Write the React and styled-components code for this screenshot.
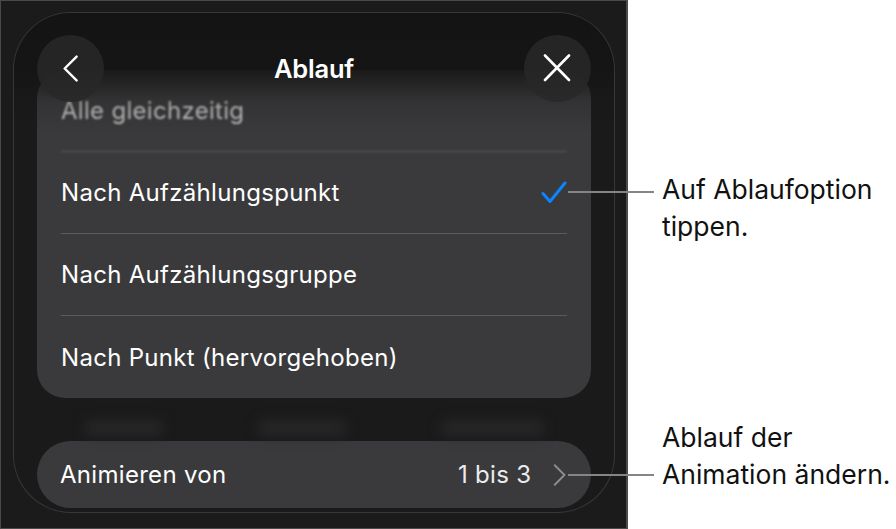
import React from "react";
import styled, { createGlobalStyle } from "styled-components";

const GlobalStyle = createGlobalStyle`
  html, body { margin: 0; padding: 0; background: #ffffff; }
  body { font-family: Inter, "Noto Sans", "Liberation Sans", sans-serif; -webkit-font-smoothing: antialiased; }
`;

const Page = styled.div`
  position: relative;
  width: 896px;
  height: 529px;
  display: flex;
  background: #ffffff;
  overflow: hidden;
`;

const Device = styled.div`
  box-sizing: border-box;
  width: 628px;
  height: 529px;
  background: #1b1b1c;
  border: 1px solid #4a4a4b;
  border-right-width: 2px;
  padding: 11px 0 0 12px;
`;

const Sheet = styled.div`
  position: relative;
  box-sizing: border-box;
  width: 602px;
  height: 501px;
  border-radius: 58px;
  border: 1px solid rgba(255, 255, 255, 0.13);
  background: #1a1a1b;
  padding: 57px 23px 0;
  display: flex;
  flex-direction: column;
  overflow: hidden;

  &::before {
    content: "";
    position: absolute;
    left: 0;
    right: 0;
    top: 0;
    height: 120px;
    background: linear-gradient(
      to bottom,
      rgba(20, 20, 20, 1) 0,
      rgba(20, 20, 20, 0.85) 57px,
      rgba(20, 20, 20, 0.2) 88px,
      rgba(20, 20, 20, 0) 120px
    );
    z-index: 1;
    pointer-events: none;
  }
`;

const Header = styled.div`
  position: absolute;
  top: 21px;
  left: 23px;
  right: 23px;
  height: 68px;
  display: flex;
  align-items: center;
  justify-content: space-between;
  z-index: 2;
`;

const RoundButton = styled.button`
  width: 67px;
  height: 67px;
  border-radius: 50%;
  border: none;
  background: rgba(40, 40, 41, 0.85);
  display: flex;
  align-items: center;
  justify-content: center;
  padding: 0;
  color: #ffffff;
`;

const Title = styled.div`
  color: #ffffff;
  font-size: 25.5px;
  font-weight: 600;
  letter-spacing: -0.2px;
`;

const OptionsCard = styled.div`
  border-radius: 28px;
  background: #3a3a3c;
  padding: 0 24px;
  display: flex;
  flex-direction: column;
`;

const OptionRow = styled.div`
  height: ${(p) => (p.$last ? 82 : 81)}px;
  display: flex;
  align-items: center;
  justify-content: space-between;
  border-bottom: ${(p) => (p.$last ? "none" : "1px solid #5b5b5e")};
  color: ${(p) => (p.$faded ? "#c4c4c4" : "#ffffff")};
  font-size: 24px;
  letter-spacing: 0.3px;
  ${(p) => (p.$faded ? "filter: blur(1.1px);" : "")}
`;

const Backdrop = styled.div`
  height: 43px;
  position: relative;
  display: flex;
  justify-content: space-around;
  align-items: center;
`;

const Blob = styled.span`
  display: block;
  width: ${(p) => p.$w}px;
  height: 16px;
  margin-top: 16px;
  border-radius: 8px;
  background: #262627;
  filter: blur(6px);
`;

const DetailPill = styled.div`
  height: 67px;
  border-radius: 34px;
  background: #3a3a3c;
  display: flex;
  align-items: center;
  padding: 0 24px 0 23px;
  color: #ffffff;
  font-size: 24px;
  letter-spacing: 0.3px;
`;

const PillLabel = styled.span`
  flex: 1;
`;

const PillValue = styled.span`
  color: #ececec;
  margin-right: 22px;
`;

const Callout = styled.div`
  position: absolute;
  left: 568px;
  top: ${(p) => p.$top}px;
  display: flex;
  align-items: flex-start;
  gap: 8px;
  z-index: 5;
`;

const Leader = styled.span`
  display: block;
  width: 86px;
  height: 2px;
  margin-top: ${(p) => p.$offset}px;
  background: #858585;
`;

const Label = styled.div`
  color: #111111;
  font-size: 26.5px;
  line-height: 37px;
  letter-spacing: 0;
  white-space: nowrap;
`;

const Chevron = ({ dir = "left", size = 26, color = "#fff", w = 2.4 }) => (
  <svg width={size * 0.62} height={size} viewBox="0 0 16 26" fill="none">
    <path
      d={dir === "left" ? "M14 1.5 L2.5 13 L14 24.5" : "M2 1.5 L13.5 13 L2 24.5"}
      stroke={color}
      strokeWidth={w}
      strokeLinecap="round"
      strokeLinejoin="round"
    />
  </svg>
);

const CloseIcon = () => (
  <svg width="30" height="28" viewBox="0 0 30 28" fill="none">
    <path d="M3 1.5 L27 26 M27 1.5 L3 26" stroke="#fff" strokeWidth="2.6" strokeLinecap="round" />
  </svg>
);

const Check = () => (
  <svg width="26" height="23" viewBox="0 0 26 23" fill="none">
    <path d="M2 12.5 L9 20.5 L24 2" stroke="#0a84ff" strokeWidth="3" strokeLinecap="round" strokeLinejoin="round" />
  </svg>
);

const options = [
  { label: "Alle gleichzeitig", faded: true },
  { label: "Nach Aufzählungspunkt", checked: true },
  { label: "Nach Aufzählungsgruppe" },
  { label: "Nach Punkt (hervorgehoben)", last: true },
];

export default function App() {
  return (
    <>
      <GlobalStyle />
      <Page>
        <Device>
          <Sheet>
            <Header>
              <RoundButton aria-label="Zurück">
                <Chevron dir="left" size={27} w={2.3} />
              </RoundButton>
              <Title>Ablauf</Title>
              <RoundButton aria-label="Schließen">
                <CloseIcon />
              </RoundButton>
            </Header>
            <OptionsCard>
              {options.map((o) => (
                <OptionRow key={o.label} $faded={o.faded} $last={o.last}>
                  <span>{o.label}</span>
                  {o.checked && <Check />}
                </OptionRow>
              ))}
            </OptionsCard>
            <Backdrop>
              <Blob $w={80} />
              <Blob $w={90} />
              <Blob $w={105} />
            </Backdrop>
            <DetailPill>
              <PillLabel>Animieren von</PillLabel>
              <PillValue>1 bis 3</PillValue>
              <Chevron dir="right" size={22} color="#8d8d91" w={2.2} />
            </DetailPill>
          </Sheet>
        </Device>
        <Callout $top={171}>
          <Leader $offset={20} />
          <Label>
            Auf Ablaufoption
            <br />
            tippen.
          </Label>
        </Callout>
        <Callout $top={419}>
          <Leader $offset={55} />
          <Label>
            Ablauf der
            <br />
            Animation ändern.
          </Label>
        </Callout>
      </Page>
    </>
  );
}
